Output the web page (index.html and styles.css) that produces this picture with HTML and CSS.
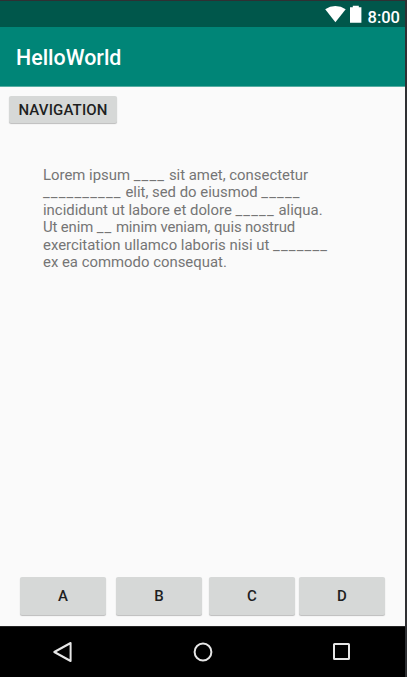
FILE: index.html
```html
<!DOCTYPE html>
<html lang="en">
<head>
<meta charset="utf-8">
<title>HelloWorld</title>
<link rel="stylesheet" href="styles.css">
</head>
<body>
<div class="screen">
  <div class="status">
    <svg class="wifi" width="22" height="18" viewBox="0 0 22 18"><path d="M0.2 4.2Q5 1 10.3 1Q16 1 20.7 4.2L10.4 17.3Z"/></svg>
    <svg class="battery" width="12" height="18" viewBox="0 0 12 18"><path d="M0 2.2H2.8V0.7H8.8V2.2H11.4V17.8H0Z"/></svg>
    <span class="clock">8:00</span>
  </div>
  <header class="appbar">HelloWorld</header>
  <main class="content">
    <button class="btn nav-btn">NAVIGATION</button>
    <p class="passage">Lorem ipsum <span class="blank">____</span> sit amet, consectetur<br><span class="blank">__________</span> elit, sed do eiusmod <span class="blank">_____</span><br>incididunt ut labore et dolore <span class="blank">_____</span> aliqua.<br><span class="tight">Ut enim <span class="blank">__</span> minim veniam, quis nostrud</span><br>exercitation ullamco laboris nisi ut <span class="blank">_______</span><br>ex ea commodo consequat.</p>
    <div class="answers">
      <button class="btn">A</button><button class="btn">B</button><button class="btn">C</button><button class="btn">D</button>
    </div>
  </main>
  <nav class="navbar">
    <svg width="22" height="22" viewBox="0 0 22 22"><path d="M2.3 11L18.6 2V20Z"/></svg>
    <svg width="22" height="22" viewBox="0 0 22 22"><circle cx="11" cy="11" r="8.4"/></svg>
    <svg width="22" height="22" viewBox="0 0 22 22"><rect x="3" y="3" width="15" height="15" rx="0.5"/></svg>
  </nav>
</div>
</body>
</html>
```

FILE: styles.css
```css
* { box-sizing: border-box; }
body { margin: 0; background: #2f3033; font-family: Roboto, sans-serif; }
.screen {
  display: flex;
  flex-direction: column;
  width: 407px;
  height: 677px;
  border-top: 1px solid #2f3033;
  border-right: 2px solid #2f3033;
  background: #fafafa;
}
.status {
  display: flex;
  flex: none;
  height: 26px;
  justify-content: flex-end;
  padding: 4px 5px 0 0;
  background: #00574b;
  color: #fff;
}
.status svg { fill: #fff; }
.wifi { margin-right: 3px; }
.battery { margin-right: 6px; }
.clock { height: 20px; font-size: 16.5px; font-weight: 500; line-height: 25px; }
.appbar {
  flex: none;
  height: 60px;
  padding-left: 16px;
  border-bottom: 1px solid #57ada2;
  background: #008577;
  color: #fff;
  font-size: 21.4px;
  font-weight: 500;
  line-height: 62px;
}
.content { display: flex; flex: 1; flex-direction: column; align-items: flex-start; }
.btn {
  width: 86px;
  height: 38px;
  padding: 0;
  border: 0;
  border-radius: 2px;
  background: #d6d8d7;
  box-shadow: 0 1px 1px rgba(0, 0, 0, .25);
  color: #1e1f1f;
  font: 500 15px Roboto, sans-serif;
}
.nav-btn { width: 108px; height: 27px; margin: 9px 0 0 9px; padding-top: 1px; letter-spacing: .15px; }
.passage {
  margin: 44px 0 0 43px;
  color: #757575;
  font-size: 14.9px;
  line-height: 17.4px;
  white-space: nowrap;
}
.blank { letter-spacing: 1.15px; }
.tight { letter-spacing: -.13px; }
.tight .blank { letter-spacing: 1.1px; }
.answers {
  display: grid;
  grid-template-columns: 96px 93px 90px 86px;
  margin: auto 0 11px 20px;
}
.navbar {
  display: flex;
  flex: none;
  height: 51px;
  align-items: center;
  justify-content: space-between;
  padding: 0 52px 0 52px;
  border-top: 1px solid #242424;
  background: #000;
}
.navbar svg { fill: none; stroke: #e6e6e6; stroke-width: 2; stroke-linejoin: round; }
```
